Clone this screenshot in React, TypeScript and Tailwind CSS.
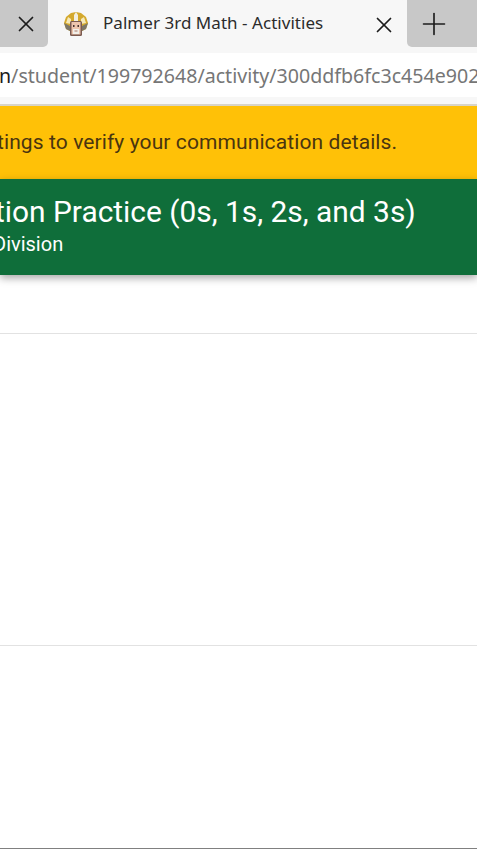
import { X, Plus } from "lucide-react";

const Favicon = () => (
  <svg width="26" height="26" viewBox="0 0 26 26" className="shrink-0">
    {/* hat */}
    <path d="M13 1 L18 2 L23 6 L25 12 L23 18 L19 20 L7 20 L3 18 L1 12 L3 6 L8 2 Z" fill="#d4a92e" />
    <path d="M13 1 L15 4 L15 10 L11 10 L11 4 Z" fill="#f3efe0" />
    <path d="M5 6 L8 8 L8 13 L3 12 Z" fill="#f6e9b8" />
    <path d="M21 6 L18 8 L18 13 L23 12 Z" fill="#f6e9b8" />
    <path d="M1 12 L3 18 L7 20 L7 15 Z" fill="#7d7768" />
    <path d="M25 12 L23 18 L19 20 L19 15 Z" fill="#7d7768" />
    {/* face */}
    <rect x="7" y="10" width="12" height="15" rx="1.5" fill="#7a5a50" />
    <rect x="8.5" y="11" width="9" height="12.5" fill="#eec5ad" />
    <rect x="10" y="14" width="1.5" height="2" fill="#4a3530" />
    <rect x="14.5" y="14" width="1.5" height="2" fill="#4a3530" />
    <rect x="10" y="18" width="6" height="5" fill="#f2efe8" />
    <rect x="11.5" y="19.5" width="3" height="1" fill="#a8786a" />
  </svg>
);

export default function App() {
  return (
    <div className="flex h-[849px] w-[477px] flex-col overflow-hidden bg-white font-['Roboto',sans-serif]">
      {/* Tab strip */}
      <div className="flex h-[53px] shrink-0 bg-[#f7f7f7]">
        <div className="flex h-[47px] w-[48px] shrink-0 items-center justify-end rounded-br-[5px] bg-[#c8c8c8] pr-[9px]">
          <X size={26} strokeWidth={1.6} color="#1c1c1c" />
        </div>
        <div className="flex h-[53px] w-[359px] shrink-0 items-start rounded-t-[8px] bg-[#f7f7f7] pl-[15px] pr-[10px] pt-[11px]">
          <Favicon />
          <span className="ml-[14px] flex-1 whitespace-nowrap pt-[1px] font-['Noto_Sans',sans-serif] text-[17px] tracking-[0.04px] leading-[22px] text-[#2b2b2b]">
            Palmer 3rd Math - Activities
          </span>
          <X size={26} strokeWidth={1.6} color="#1c1c1c" className="mt-[1px]" />
        </div>
        <div className="flex h-[47px] flex-1 items-center rounded-bl-[5px] bg-[#c8c8c8] pl-[9px]">
          <Plus size={36} strokeWidth={1.1} color="#1c1c1c" />
        </div>
      </div>

      {/* Address bar */}
      <div className="flex h-[44px] shrink-0 items-center overflow-hidden bg-white pt-[1px]">
        <span className="-ml-[1px] whitespace-nowrap font-['Noto_Sans',sans-serif] text-[19.6px] text-[#767676]">
          <span className="text-[#1c1c1c]">n</span>/student/199792648/activity/300ddfb6fc3c454e902
        </span>
      </div>
      <div className="h-[9px] shrink-0 border-b-2 border-[#d8d4c8] bg-[#f7f7f7]" />

      {/* Warning banner */}
      <div className="flex h-[73px] shrink-0 items-center overflow-hidden bg-[#ffc107]">
        <span className="-ml-[10px] whitespace-nowrap text-[21px] tracking-[0.1px] text-[#4a3510]">
          ttings to verify your communication details.
        </span>
      </div>

      {/* Activity header */}
      <div className="z-10 h-[96px] shrink-0 overflow-hidden bg-[#0f6e3a] pt-[13px] text-white shadow-[0_3px_8px_rgba(0,0,0,0.35)]">
        <div className="-ml-[5px] whitespace-nowrap text-[29.9px] leading-[40px]">tion Practice (0s, 1s, 2s, and 3s)</div>
        <div className="-ml-[7px] whitespace-nowrap text-[20px] leading-[24px]">Division</div>
      </div>

      {/* Empty rows */}
      <div className="h-[59px] shrink-0 border-b border-[#e2e2e2]" />
      <div className="h-[312px] shrink-0 border-b border-[#e2e2e2]" />
      <div className="flex-1 border-b border-[#808080]" />
    </div>
  );
}
